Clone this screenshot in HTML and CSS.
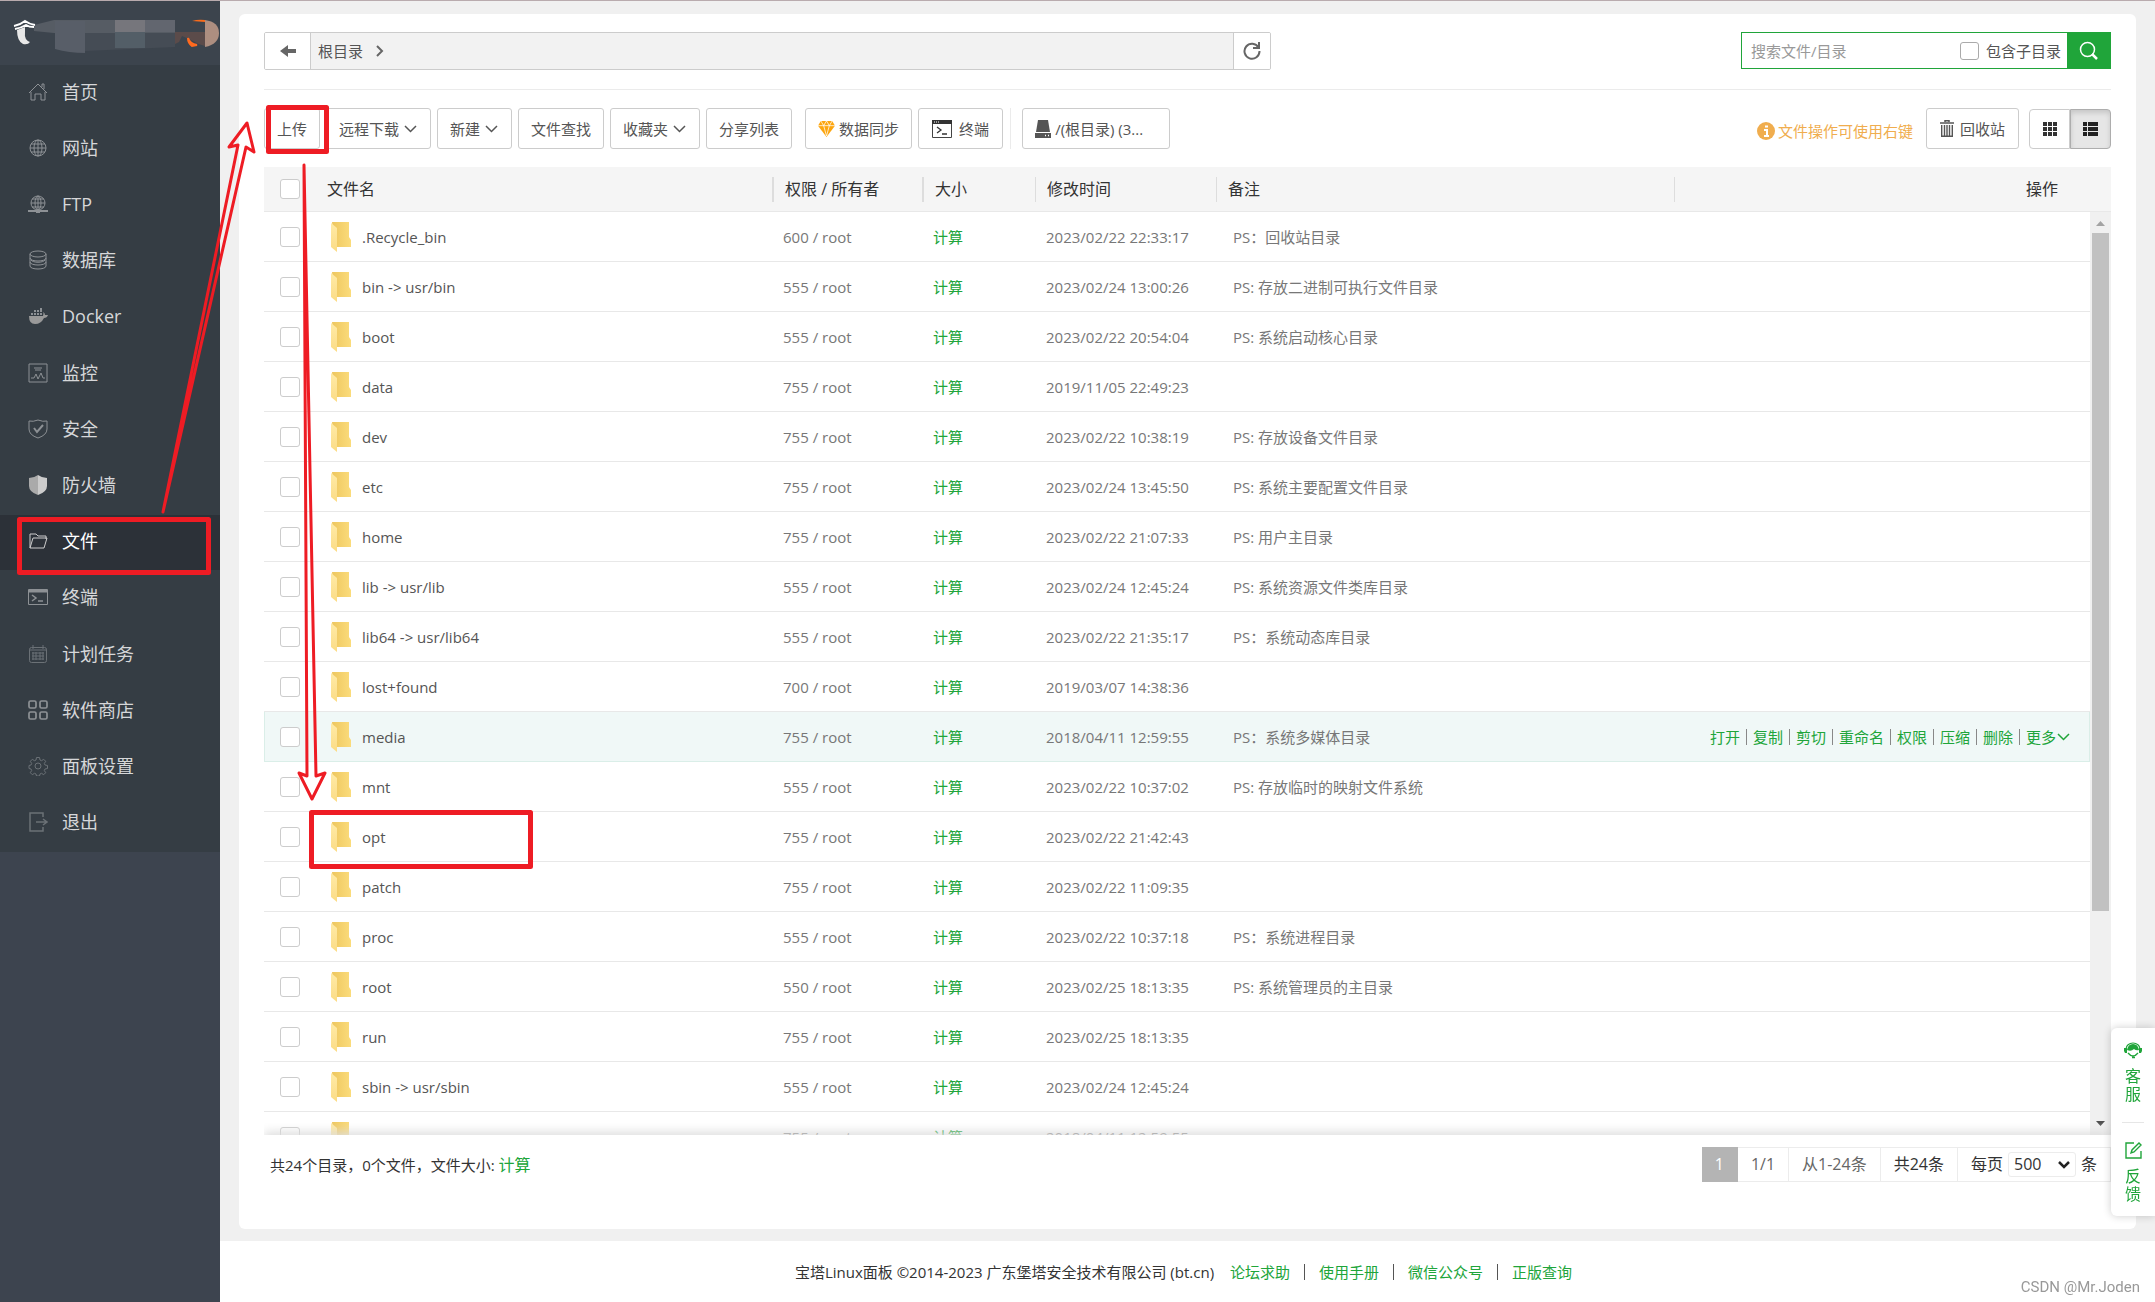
FILE: index.html
```html
<!DOCTYPE html>
<html lang="zh-CN">
<head>
<meta charset="utf-8">
<title>宝塔Linux面板</title>
<link rel="stylesheet" href="styles.css">
</head>
<body>
<svg class="defs" aria-hidden="true">
  <linearGradient id="foldBack" x1="0" x2="1" y1="0" y2="0"><stop offset="0" stop-color="#eec75f"/><stop offset="1" stop-color="#fbdc7c"/></linearGradient>
  <linearGradient id="foldFront" x1="0" x2="0" y1="0" y2="1"><stop offset="0" stop-color="#ffeaa6"/><stop offset="1" stop-color="#fbdc85"/></linearGradient>
  <symbol id="folder" viewBox="0 0 20 30"><path d="M1 0h17v15l2 3v7H4z" fill="url(#foldBack)"/><path d="M0 1l6 5v24l-6-5z" fill="url(#foldFront)"/></symbol>
  <symbol id="chev" viewBox="0 0 15 15"><path d="M2 5l5.500 5.500L13 5" fill="none" stroke="currentColor" stroke-width="1.500"/></symbol>
</svg>

<div class="app">
  <aside class="sidebar">
    <div class="brand">
      <svg width="220" height="64" viewBox="0 0 220 64" aria-hidden="true">
        <path d="M34 24l20-5h121v13H54l-20-2z" fill="#565c64"/>
        <path d="M55 20h30v32q-16 0-30-4z" fill="#585e68"/>
        <path d="M85 32h90v14l-90 4z" fill="#454c55"/>
        <path d="M115 19h30v12h-30z" fill="#76767c"/><path d="M115 31h30v16h-30z" fill="#535e67"/>
        <path d="M145 19h30v12h-30z" fill="#62666f"/>
        <path d="M175 31h30v14q-8-2-14-6l-9-4-3 6-4 2z" fill="#5b4b4a"/>
        <path d="M192 20q6-2 13-1v2z" fill="#f76b1c"/><path d="M188 37q2 6 9 7l-5 1q-4-3-4-8z" fill="#ff6a1f" stroke="#ff6a1f" stroke-width="2"/>
        <path d="M205 19q14 2 14 13t-14 14z" fill="#ad8e80"/>
        <path d="M14 25q6-1 11-5 4 3 10 4M15 28q6-1 11-4 3 2 8 2" fill="none" stroke="#fff" stroke-width="2"/>
        <path d="M17 29l8-3v5q-1 8 5 10-2 3-7 2-6-3-6-14z" fill="#e8e8e8"/>
      </svg>
    </div>
    <nav>
      <ul class="menu">
        <li><a href="#"><svg viewBox="0 0 20 20"><path d="M1 11L10 2l9 9M3 10v8h4v-6h6v6h4v-8M14 5V2h2v5"/></svg>首页</a></li>
        <li><a href="#"><svg viewBox="0 0 20 20"><circle cx="10" cy="10" r="8"/><ellipse cx="10" cy="10" rx="4" ry="8"/><path d="M2 10h16M10 2v16M3 6h14M3 14h14"/></svg>网站</a></li>
        <li><a href="#"><svg viewBox="0 0 20 20"><circle cx="10" cy="9" r="7"/><ellipse cx="10" cy="9" rx="3" ry="7"/><path d="M3 9h14M10 2v14M4 5h12M4 13h12"/><path d="M0 17h20M8 18h4" stroke-width="2"/></svg>FTP</a></li>
        <li><a href="#"><svg viewBox="0 0 20 20"><ellipse cx="10" cy="4" rx="8" ry="3"/><path d="M2 4v12c0 4 16 4 16 0V4M2 8c0 4 16 4 16 0M2 12c0 4 16 4 16 0M3 10c2 3 12 3 14 0"/></svg>数据库</a></li>
        <li><a href="#"><svg viewBox="0 0 20 20"><path d="M1 10h14q1-3 0-4 2 1 2 3h3q-1 3-4 3-3 6-9 6-6 0-6-8z" fill="#999" stroke="none"/><path d="M3 8h2M6 8h2M9 8h2M12 8h2M6 5h2M9 5h2M12 5h2M12 3h2" stroke-width="2"/></svg>Docker</a></li>
        <li><a href="#"><svg viewBox="0 0 20 20"><path d="M1 1h18v18H1zM6 5h8M7 7h6M3 15h3l2-4 2 5 3-6 2 5h2"/></svg>监控</a></li>
        <li><a href="#"><svg viewBox="0 0 20 20"><path d="M10 1q5 2 9 1v8q0 6-9 9-9-3-9-9V2q4 1 9-1z"/><path d="M6 9l3 4 6-7" stroke-width="2"/></svg>安全</a></li>
        <li><a href="#"><svg viewBox="0 0 20 20"><path d="M10 0q4 3 9 3v8q0 6-9 9z" fill="#ccc" stroke="none"/><path d="M10 0Q6 3 1 3v8q0 6 9 9z" fill="#aaa" stroke="none"/></svg>防火墙</a></li>
        <li><a href="#" class="active"><svg viewBox="0 0 20 20"><path d="M2 17V3h6l2 2h8v3M5 7h14l-3 10H2z"/></svg>文件</a></li>
        <li><a href="#"><svg viewBox="0 0 20 20"><path d="M0.500 2.500h19v15H.5z"/><path d="M1 4h18" stroke-width="3"/><path d="M4 8l4 3-4 3M10 14h5" stroke-width="1.500"/></svg>终端</a></li>
        <li><a href="#"><svg class="dim" viewBox="0 0 20 20"><rect x="1.500" y="3.500" width="17" height="15" rx="2"/><path d="M1 6h18M5 1v4M15 1v4M4 9h12M4 12h12M4 15h12M5 8v8M8 8v8M12 8v8M15 8v8"/></svg>计划任务</a></li>
        <li><a href="#"><svg viewBox="0 0 20 20"><g stroke-width="1.700"><rect x="1" y="1" width="7" height="7" rx="1.500"/><rect x="12" y="1" width="7" height="7" rx="1.500"/><rect x="1" y="12" width="7" height="7" rx="1.500"/><rect x="12" y="12" width="7" height="7" rx="1.500"/></g></svg>软件商店</a></li>
        <li><a href="#"><svg class="dim" viewBox="0 0 20 20"><circle cx="10" cy="10" r="3"/><path d="M8.500 1.500h3l.5 2.500 1.500.7 2.200-1.400 2 2-1.400 2.200.7 1.500 2.500.5v3l-2.500.5-.7 1.500 1.400 2.200-2 2-2.200-1.400-1.500.7-.5 2h-3l-.5-2-1.500-.7-2.200 1.400-2-2 1.400-2.200L3 13l-2-.5v-3L3 9l.7-1.500-1.400-2.200 2-2 2.200 1.400L8 4z"/></svg>面板设置</a></li>
        <li><a href="#"><svg class="dim" viewBox="0 0 20 20"><path d="M15 5V1H2v18h13v-4M8 10h10M15 7l4 3-4 3" stroke-width="1.500"/></svg>退出</a></li>
      </ul>
    </nav>
  </aside>

  <div class="content">
    <main class="panel">
      <header class="topbar">
        <div class="path">
          <button class="back" type="button" aria-label="返回"><svg width="16" height="14" viewBox="0 0 16 14"><path d="M0 7l8-6v4h8v4H8v4z" fill="#666"/></svg></button>
          <div class="crumbs"><a href="#">根目录</a><svg width="8" height="12" viewBox="0 0 8 12"><path d="M1 1l5 5-5 5" fill="none" stroke="#666" stroke-width="2"/></svg></div>
          <button class="reload" type="button" aria-label="刷新"><svg width="18" height="18" viewBox="0 0 18 18"><path d="M15.500 5.500A7.500 7.500 0 1 0 16.500 9" fill="none" stroke="#666" stroke-width="2"/><path d="M16 0v6h-6" fill="none" stroke="#666" stroke-width="2"/></svg></button>
        </div>
        <form class="search">
          <input class="query" type="text" placeholder="搜索文件/目录" aria-label="搜索文件/目录">
          <label class="deep"><input class="box" type="checkbox">包含子目录</label>
          <button class="go" type="button" aria-label="搜索"><svg width="20" height="20" viewBox="0 0 20 20"><circle cx="8.500" cy="8.500" r="7" fill="none" stroke="#fff" stroke-width="1.500"/><path d="M13 13l5 5" stroke="#fff" stroke-width="2.500"/></svg></button>
        </form>
      </header>

      <div class="tools">
        <button class="btn" type="button">上传</button>
        <button class="btn" type="button">远程下载<svg class="chev"><use href="#chev"/></svg></button>
        <button class="btn" type="button">新建<svg class="chev"><use href="#chev"/></svg></button>
        <button class="btn" type="button">文件查找</button>
        <button class="btn" type="button">收藏夹<svg class="chev"><use href="#chev"/></svg></button>
        <button class="btn" type="button">分享列表</button>
        <div class="group">
          <button class="btn" type="button"><svg width="17" height="17" viewBox="0 0 18 18"><path d="M3 1h12l3 5-9 12L0 6z" fill="#fda50d"/><path d="M0 6h18M6 6l3 11 3-11M3 1l3 5 3-5 3 5 3-5" fill="none" stroke="#fff" stroke-width=".8"/></svg>数据同步</button>
          <button class="btn term" type="button"><svg width="20" height="18" viewBox="0 0 20 18"><path d="M.5.500h19v17H.5z" fill="none" stroke="#444"/><path d="M0 0h20v4H0z" fill="#333"/><path d="M2 2h5" stroke="#fff" stroke-dasharray="1 1"/><path d="M5 7l4 3-4 3M10 14h5" fill="none" stroke="#333" stroke-width="1.300"/></svg>终端</button>
        </div>
        <div class="disk"><button class="btn" type="button"><svg width="16" height="18" viewBox="0 0 16 18"><path d="M3 0h10l2 12H1z" fill="#555"/><path d="M0 13h16v5H0z" fill="#555"/><path d="M10 15.500h1M13 15.500h1" stroke="#fff" stroke-width="1.500"/></svg>/(根目录) (3...</button></div>
        <p class="tip"><svg width="18" height="18" viewBox="0 0 18 18"><circle cx="9" cy="9" r="9" fill="#f0ad4e"/><path d="M7 8h3v6M7 14h5M8 4.500h3" fill="none" stroke="#fff" stroke-width="2"/></svg>文件操作可使用右键</p>
        <button class="btn trash" type="button"><svg width="14" height="17" viewBox="0 0 14 17"><path d="M0 3h14M5 2V.7h4V2" fill="none" stroke="#555" stroke-width="1.500"/><path d="M1.700 5v11.300h10.600V5M4.500 5v11M7 5v11M9.500 5v11" fill="none" stroke="#555" stroke-width="1.400"/></svg>回收站</button>
        <div class="views">
          <button type="button" aria-label="图标视图"><svg width="14" height="14" viewBox="0 0 14 14"><path d="M2 0v14M7 0v14M12 0v14" stroke="#333" stroke-width="4" stroke-dasharray="4 1"/></svg></button>
          <button class="on" type="button" aria-label="列表视图"><svg width="15" height="14" viewBox="0 0 15 14"><path d="M2 0v14" stroke="#222" stroke-width="4" stroke-dasharray="4 1"/><path d="M5 2h10M5 7h10M5 12h10" stroke="#222" stroke-width="4"/></svg></button>
        </div>
      </div>

      <table class="files head">
        <colgroup><col class="c-check"><col class="c-name"><col class="c-perm"><col class="c-size"><col class="c-time"><col class="c-note"><col></colgroup>
        <thead><tr><th><input class="box" type="checkbox" aria-label="全选"></th><th>文件名</th><th class="bar wide">权限 / 所有者</th><th class="bar wide">大小</th><th class="bar">修改时间</th><th class="bar">备注</th><th class="bar ops">操作</th></tr></thead>
      </table>
      <div class="list">
        <div class="rows">
          <table class="files body">
            <colgroup><col class="c-check"><col class="c-name"><col class="c-perm"><col class="c-size"><col class="c-time"><col class="c-note"><col></colgroup>
            <tbody>
<tr><td><input class="box" type="checkbox" aria-label=".Recycle_bin"></td><td><div class="name"><svg><use href="#folder"/></svg>.Recycle_bin</div></td><td>600 / root</td><td><a href="#">计算</a></td><td>2023/02/22 22:33:17</td><td>PS：回收站目录</td><td></td></tr>
<tr><td><input class="box" type="checkbox" aria-label="bin"></td><td><div class="name"><svg><use href="#folder"/></svg>bin -&gt; usr/bin</div></td><td>555 / root</td><td><a href="#">计算</a></td><td>2023/02/24 13:00:26</td><td>PS: 存放二进制可执行文件目录</td><td></td></tr>
<tr><td><input class="box" type="checkbox" aria-label="boot"></td><td><div class="name"><svg><use href="#folder"/></svg>boot</div></td><td>555 / root</td><td><a href="#">计算</a></td><td>2023/02/22 20:54:04</td><td>PS: 系统启动核心目录</td><td></td></tr>
<tr><td><input class="box" type="checkbox" aria-label="data"></td><td><div class="name"><svg><use href="#folder"/></svg>data</div></td><td>755 / root</td><td><a href="#">计算</a></td><td>2019/11/05 22:49:23</td><td></td><td></td></tr>
<tr><td><input class="box" type="checkbox" aria-label="dev"></td><td><div class="name"><svg><use href="#folder"/></svg>dev</div></td><td>755 / root</td><td><a href="#">计算</a></td><td>2023/02/22 10:38:19</td><td>PS: 存放设备文件目录</td><td></td></tr>
<tr><td><input class="box" type="checkbox" aria-label="etc"></td><td><div class="name"><svg><use href="#folder"/></svg>etc</div></td><td>755 / root</td><td><a href="#">计算</a></td><td>2023/02/24 13:45:50</td><td>PS: 系统主要配置文件目录</td><td></td></tr>
<tr><td><input class="box" type="checkbox" aria-label="home"></td><td><div class="name"><svg><use href="#folder"/></svg>home</div></td><td>755 / root</td><td><a href="#">计算</a></td><td>2023/02/22 21:07:33</td><td>PS: 用户主目录</td><td></td></tr>
<tr><td><input class="box" type="checkbox" aria-label="lib"></td><td><div class="name"><svg><use href="#folder"/></svg>lib -&gt; usr/lib</div></td><td>555 / root</td><td><a href="#">计算</a></td><td>2023/02/24 12:45:24</td><td>PS: 系统资源文件类库目录</td><td></td></tr>
<tr><td><input class="box" type="checkbox" aria-label="lib64"></td><td><div class="name"><svg><use href="#folder"/></svg>lib64 -&gt; usr/lib64</div></td><td>555 / root</td><td><a href="#">计算</a></td><td>2023/02/22 21:35:17</td><td>PS：系统动态库目录</td><td></td></tr>
<tr><td><input class="box" type="checkbox" aria-label="lost+found"></td><td><div class="name"><svg><use href="#folder"/></svg>lost+found</div></td><td>700 / root</td><td><a href="#">计算</a></td><td>2019/03/07 14:38:36</td><td></td><td></td></tr>
<tr class="hover"><td><input class="box" type="checkbox" aria-label="media"></td><td><div class="name"><svg><use href="#folder"/></svg>media</div></td><td>755 / root</td><td><a href="#">计算</a></td><td>2018/04/11 12:59:55</td><td>PS：系统多媒体目录</td><td class="actions"><div><a href="#">打开</a><i></i><a href="#">复制</a><i></i><a href="#">剪切</a><i></i><a href="#">重命名</a><i></i><a href="#">权限</a><i></i><a href="#">压缩</a><i></i><a href="#">删除</a><i></i><a href="#">更多<svg class="chev"><use href="#chev"/></svg></a></div></td></tr>
<tr><td><input class="box" type="checkbox" aria-label="mnt"></td><td><div class="name"><svg><use href="#folder"/></svg>mnt</div></td><td>555 / root</td><td><a href="#">计算</a></td><td>2023/02/22 10:37:02</td><td>PS: 存放临时的映射文件系统</td><td></td></tr>
<tr><td><input class="box" type="checkbox" aria-label="opt"></td><td><div class="name"><svg><use href="#folder"/></svg>opt</div></td><td>755 / root</td><td><a href="#">计算</a></td><td>2023/02/22 21:42:43</td><td></td><td></td></tr>
<tr><td><input class="box" type="checkbox" aria-label="patch"></td><td><div class="name"><svg><use href="#folder"/></svg>patch</div></td><td>755 / root</td><td><a href="#">计算</a></td><td>2023/02/22 11:09:35</td><td></td><td></td></tr>
<tr><td><input class="box" type="checkbox" aria-label="proc"></td><td><div class="name"><svg><use href="#folder"/></svg>proc</div></td><td>555 / root</td><td><a href="#">计算</a></td><td>2023/02/22 10:37:18</td><td>PS：系统进程目录</td><td></td></tr>
<tr><td><input class="box" type="checkbox" aria-label="root"></td><td><div class="name"><svg><use href="#folder"/></svg>root</div></td><td>550 / root</td><td><a href="#">计算</a></td><td>2023/02/25 18:13:35</td><td>PS: 系统管理员的主目录</td><td></td></tr>
<tr><td><input class="box" type="checkbox" aria-label="run"></td><td><div class="name"><svg><use href="#folder"/></svg>run</div></td><td>755 / root</td><td><a href="#">计算</a></td><td>2023/02/25 18:13:35</td><td></td><td></td></tr>
<tr><td><input class="box" type="checkbox" aria-label="sbin"></td><td><div class="name"><svg><use href="#folder"/></svg>sbin -&gt; usr/sbin</div></td><td>555 / root</td><td><a href="#">计算</a></td><td>2023/02/24 12:45:24</td><td></td><td></td></tr>
<tr><td><input class="box" type="checkbox" aria-label="选择"></td><td><div class="name"><svg><use href="#folder"/></svg></div></td><td>755 / root</td><td><a href="#">计算</a></td><td>2018/04/11 12:59:55</td><td></td><td></td></tr>
            </tbody>
          </table>
        </div>
        <div class="scroll" aria-hidden="true">
          <svg width="9" height="21" viewBox="0 0 9 21"><path d="M0 14h9L4.500 9z" fill="#a3a3a3"/></svg>
          <div class="track"><div class="thumb"></div></div>
          <svg width="9" height="21" viewBox="0 0 9 21"><path d="M0 7h9l-4.500 5z" fill="#505050"/></svg>
        </div>
      </div>

      <div class="summary">
        <p>共24个目录，0个文件，文件大小: <a href="#">计算</a></p>
        <div class="pager">
          <span class="cur">1</span><span>1/1</span><span>从1-24条</span><span class="dark">共24条</span>
          <label class="dark size">每页<span class="pick"><select><option>500</option></select><svg width="14" height="10" viewBox="0 0 14 10"><path d="M2 2l5 5 5-5" fill="none" stroke="#222" stroke-width="2.500"/></svg></span>条</label>
        </div>
      </div>
    </main>
    <footer class="foot">
      <span>宝塔Linux面板 ©2014-2023 广东堡塔安全技术有限公司 (bt.cn)</span>
      <a href="#">论坛求助</a><i></i><a href="#">使用手册</a><i></i><a href="#">微信公众号</a><i></i><a href="#">正版查询</a>
    </footer>
  </div>
</div>

<div class="service">
  <a href="#"><svg width="18" height="17" viewBox="0 0 18 17"><path d="M2 7a7 6 0 0 1 14 0" fill="none" stroke="#20a53a" stroke-width="1.200"/><path d="M3 8q1-6 6-6t6 6q-3 1-5-1-3 3-7 1z" fill="#20a53a"/><path d="M0 6h3v5H1L0 9zM18 6h-3v5h2l1-2z" fill="#20a53a"/><path d="M4 11q5 6 10 0M8 15.500h3" fill="none" stroke="#20a53a" stroke-width="1.300"/></svg>客服</a>
  <a href="#"><svg width="17" height="17" viewBox="0 0 17 17"><path d="M9 1H1v15h15V9M6 11l1-3 7-7 2 2-7 7z" fill="none" stroke="#20a53a" stroke-width="1.400"/></svg>反馈</a>
</div>

<svg class="marks" aria-hidden="true" fill="none" stroke="#ee1c24" stroke-linejoin="round" stroke-linecap="round">
  <g stroke-width="5"><rect x="268.500" y="107.500" width="58" height="44"/><rect x="19.500" y="519.500" width="189" height="53"/><rect x="311.500" y="812.500" width="219" height="54"/></g>
  <g stroke-width="3"><path d="M163 512L238 145l-9 2 18-24 7 29-8-5z"/><path d="M304 165l3 611-8-3 13 26 13-26-9 3z"/></g>
</svg>
<div class="credit">CSDN @Mr.Joden</div>
</body>
</html>
```
FILE: styles.css
```css
* { box-sizing: border-box; }
body { margin: 0; font: 15px/20px "Open Sans", "Noto Sans CJK SC", sans-serif; color: #555; background: #f0f0f0; }
a { color: #20a53a; text-decoration: none; }
p, ul { margin: 0; padding: 0; list-style: none; }
button, input, select { font: inherit; color: inherit; margin: 0; }
button { padding: 0; background: #fff; border: 0; }
svg { flex: none; }
.defs { position: absolute; width: 0; height: 0; }
.app { display: flex; height: 100vh; border-top: 1px solid #b9abae; }

.sidebar { flex: none; width: 220px; background: #3d444f; }
.brand { height: 64px; background: #3c444d; }
.brand svg { display: block; }
.menu { display: grid; grid-auto-rows: 1fr; min-height: 787px; background: #353d44; }
.menu a { display: flex; align-items: center; gap: 14px; height: 55px; padding: 0 0 2px 28px; font-size: 18px; color: #d6d7d9; }
.menu svg { width: 20px; height: 20px; fill: none; stroke: #8d9195; }
.menu svg.dim { stroke: #6b7176; }
.menu a.active { color: #fff; background: #2c3138; }
.menu a.active svg { stroke: #ccc; }

.content { flex: 1; min-width: 0; display: flex; flex-direction: column; }
.panel { flex: 1; min-height: 0; display: flex; flex-direction: column; margin: 13px 19px 12px; padding: 18px 25px 0; background: #fff; border-radius: 6px; }
.topbar { display: flex; justify-content: space-between; padding-bottom: 19px; border-bottom: 1px solid #ebebeb; }
.path { display: flex; width: calc(100% - 840px); height: 38px; border: 1px solid #ccc; border-radius: 2px; overflow: hidden; }
.back { width: 46px; border-right: 1px solid #ccc; }
.crumbs { flex: 1; display: flex; align-items: center; gap: 13px; padding-left: 7px; background: #f2f2f2; }
.crumbs a { color: #555; }
.reload { width: 37px; border-left: 1px solid #ccc; }
.back svg, .reload svg, .go svg { display: block; margin: auto; }
.search { display: flex; width: 370px; height: 37px; border: 1px solid #20a53a; }
.query { flex: 1; min-width: 0; padding: 0 9px; border: 0; outline: 0; }
.query::placeholder { color: #999; }
.deep { display: flex; align-items: center; gap: 7px; padding-right: 6px; }
.go { width: 43px; background: #20a53a; }
.box { appearance: none; display: block; width: 20px; height: 20px; background: #fff; border: 1px solid #ccc; border-radius: 3px; }
.deep .box { width: 19px; height: 18px; border-color: #aaa; }

.tools { display: flex; align-items: center; gap: 6px; height: 77px; }
.btn { display: flex; align-items: center; gap: 4px; height: 41px; padding: 0 12px; border: 1px solid #ccc; border-radius: 3px; white-space: nowrap; }
.chev { width: 15px; height: 15px; }
.group { display: flex; gap: 6px; margin-left: 7px; }
.term { gap: 7px; padding: 0 13px; }
.disk { margin-left: 1px; padding-left: 11px; border-left: 1px solid #ebebeb; }
.disk .btn { width: 148px; }
.tip { display: flex; align-items: center; gap: 3px; margin-left: auto; padding-top: 4px; color: #f0ad4e; }
.trash { gap: 6px; margin-left: 7px; padding: 0 13px; }
.views { display: flex; height: 40px; margin-left: 4px; }
.views button { display: flex; align-items: center; justify-content: center; width: 41px; border: 1px solid #ccc; border-radius: 4px 0 0 4px; }
.views button.on { background: #e6e6e6; border-color: #adadad; border-radius: 0 4px 4px 0; box-shadow: inset 0 3px 5px #0002; }

.files { width: 100%; table-layout: fixed; border-collapse: separate; border-spacing: 0; }
.c-check { width: 63px; }
.c-name { width: 445px; }
.c-perm { width: 150px; }
.c-size { width: 113px; }
.c-time { width: 181px; }
.c-note { width: 458px; }
th, td { padding: 0 0 0 11px; text-align: left; white-space: nowrap; border-bottom: 1px solid #e8e8e8; }
th:first-child, td:first-child { padding-left: 16px; }
th { height: 45px; font-size: 16px; font-weight: 400; color: #333; background: #f5f5f5; }
th:nth-child(2) { padding-left: 0; }
th.bar { padding-left: 12px; background: linear-gradient(#ddd, #ddd) left center / 1px 25px no-repeat #f5f5f5; }
th.wide { padding-left: 13px; background-size: 2px 25px; }
th.ops { padding-right: 53px; text-align: right; }
td { height: 50px; color: #777; }
td:nth-child(2) { padding-left: 4px; color: #555; }
td:nth-child(6) { padding-left: 17px; }
.name { display: flex; align-items: center; gap: 11px; }
.name svg { width: 20px; height: 30px; }
.hover td { background: #f0f8f7; border-bottom-color: #daeee8; }
.hover td:first-child { border-left: 1px solid #daeee8; padding-left: 15px; }
.hover td:last-child { border-right: 1px solid #daeee8; }
.actions div { display: flex; align-items: center; justify-content: flex-end; gap: 6px; padding-right: 18px; }
.actions a { display: flex; align-items: center; }
.actions i { width: 1px; height: 16px; background: #888; }
.list { flex: 1; min-height: 0; display: flex; }
.rows { flex: 1; min-width: 0; overflow: hidden; }
.scroll { width: 21px; display: flex; flex-direction: column; align-items: center; background: #f0f0f0; }
.track { flex: 1; width: 17px; }
.thumb { height: 77%; background: #c1c1c1; }

.summary { position: relative; display: flex; justify-content: space-between; flex: none; height: 94px; padding: 12px 0 0 6px; background: #fff; box-shadow: 0 -3px 10px #ddd; clip-path: inset(-12px 0 0 0); color: #333; }
.summary p { line-height: 36px; }
.summary p a { font-size: 16px; }
.pager { display: flex; height: 35px; font-size: 16px; line-height: 33px; color: #666; }
.pager > * { padding: 0 13px; border: 1px solid #ececec; border-left: 0; }
.pager .cur { color: #fff; background: #b4b4b4; border-color: #b4b4b4; }
.pager .dark { color: #333; }
.pager .size { display: flex; align-items: center; gap: 5px; }
.pick { position: relative; width: 68px; height: 25px; }
.pick select { display: block; appearance: none; width: 100%; height: 100%; padding: 0 5px; line-height: 23px; background: #fff; border: 1px solid #ececec; border-radius: 3px; }
.pick svg { position: absolute; right: 5px; top: 8px; pointer-events: none; }

.foot { display: flex; align-items: center; justify-content: center; gap: 14px; flex: none; height: 61px; padding-right: 8px; background: #fff; color: #333; }
.foot span { margin-right: 2px; }
.foot i { width: 1px; height: 16px; background: #555; }

.service { position: fixed; right: 0; bottom: 86px; width: 44px; padding: 0 11px; background: #fff; border-radius: 6px 0 0 6px; box-shadow: 0 0 8px #0003; }
.service a { display: flex; flex-direction: column; align-items: center; gap: 8px; height: 94px; padding: 14px 3px 0; font-size: 16px; line-height: 18px; text-align: center; word-break: break-all; }
.service a + a { padding-top: 19px; border-top: 1px solid #e6e6e6; }
.marks { position: absolute; left: 0; top: 0; width: 540px; height: 880px; pointer-events: none; }
.credit { position: fixed; right: 15px; bottom: 5px; font: 15px/20px Roboto, sans-serif; color: #999; }
```
